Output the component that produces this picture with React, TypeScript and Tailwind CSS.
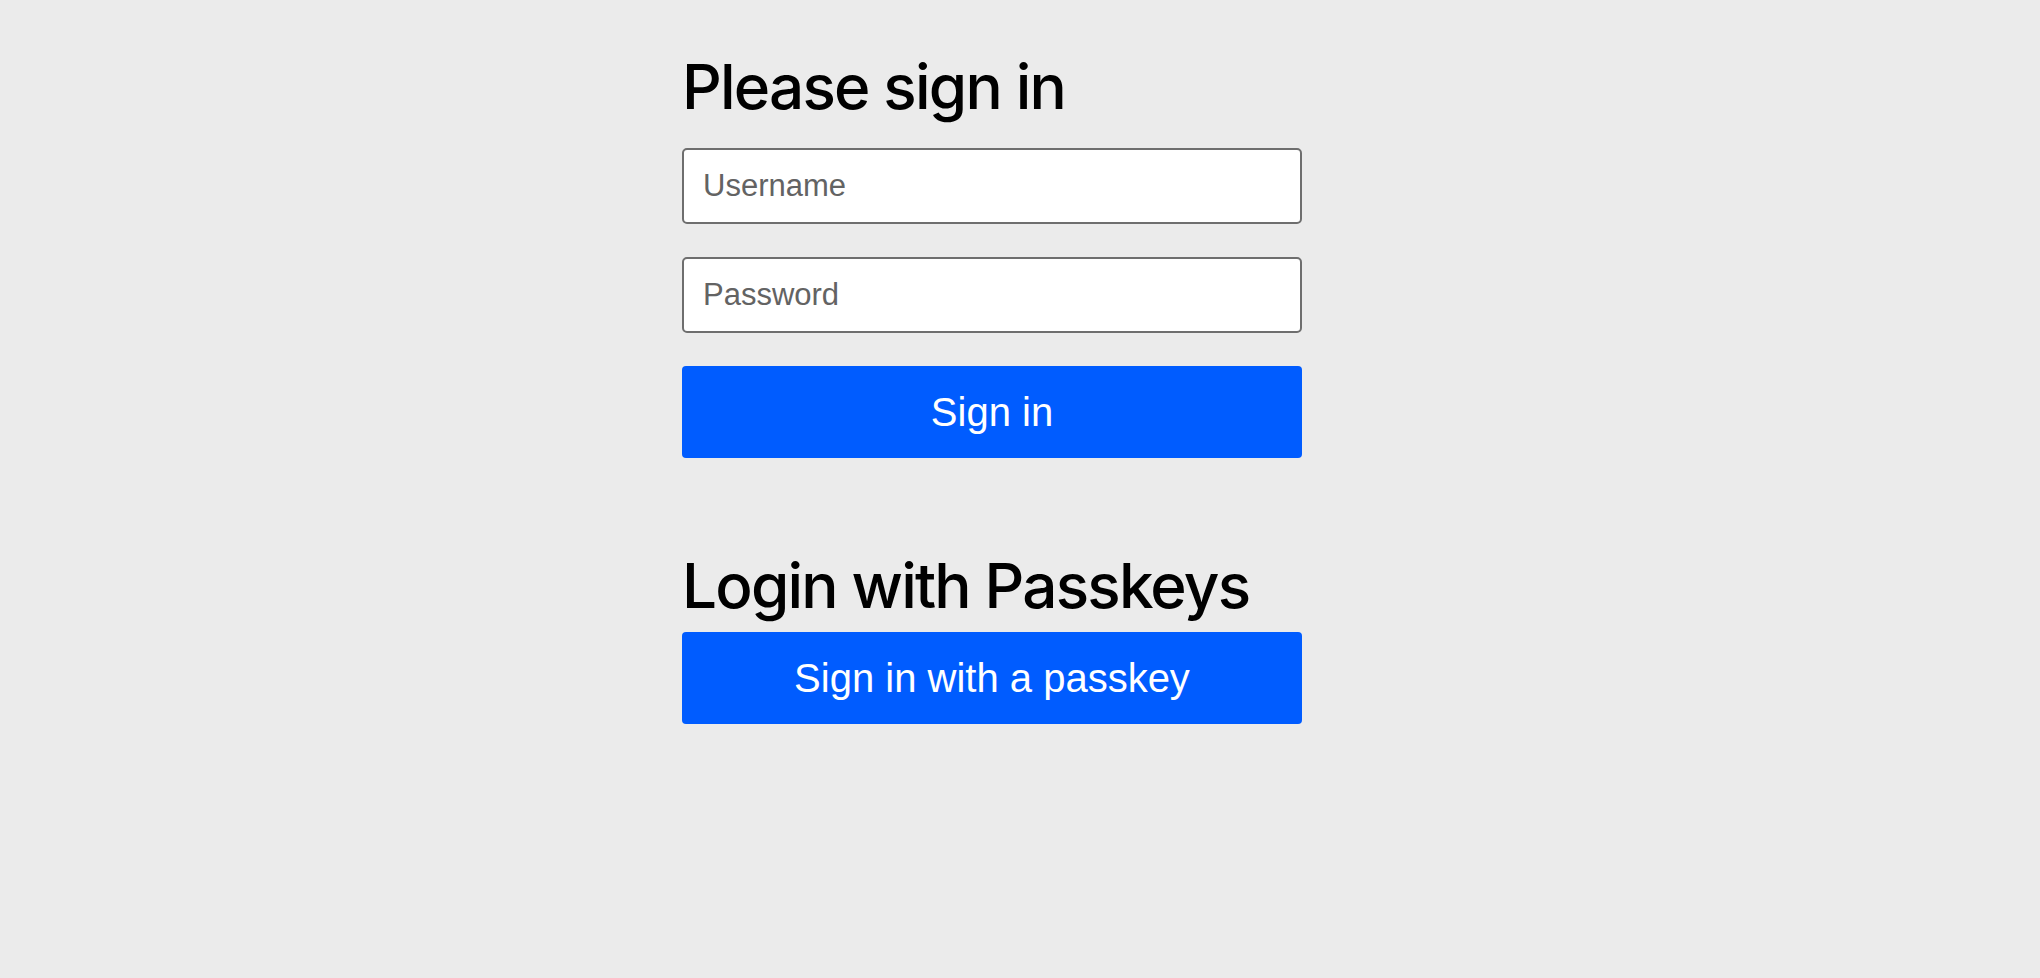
import React from "react";

export default function App() {
  return (
    <div className="min-h-[978px] w-full bg-[#ebebeb] pl-[682px] pt-[56px]" style={{ fontFamily: '"Liberation Sans", Arial, sans-serif' }}>
      <div className="flex w-[620px] flex-col">
        <h2 className="mb-[30px] text-[62px] font-medium leading-[62px] tracking-[-1.8px] text-black" style={{ fontFamily: 'Inter, "Liberation Sans", sans-serif' }}>
          Please sign in
        </h2>
        <input
          type="text"
          placeholder="Username"
          className="mb-[33px] h-[76px] w-full rounded-[5px] border-2 border-[#6e6e6e] bg-white px-[19px] text-[31px] text-black outline-none placeholder:text-[#636363]"
        />
        <input
          type="password"
          placeholder="Password"
          className="mb-[33px] h-[76px] w-full rounded-[5px] border-2 border-[#6e6e6e] bg-white px-[19px] text-[31px] text-black outline-none placeholder:text-[#636363]"
        />
        <button className="h-[92px] w-full rounded-[4px] bg-[#005cff] text-[40px] text-white">
          Sign in
        </button>
        <h2 className="mt-[97px] mb-[15px] text-[62px] font-medium leading-[62px] tracking-[-1.8px] text-black" style={{ fontFamily: 'Inter, "Liberation Sans", sans-serif' }}>
          Login with Passkeys
        </h2>
        <button className="h-[92px] w-full rounded-[4px] bg-[#005cff] text-[40px] text-white">
          Sign in with a passkey
        </button>
      </div>
    </div>
  );
}
